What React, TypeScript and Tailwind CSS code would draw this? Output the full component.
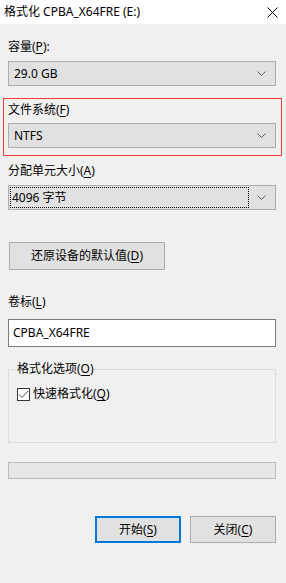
import React from 'react';

const font = "font-['Noto_Sans','Noto_Sans_CJK_SC',sans-serif]";

function Chevron() {
  return (
    <svg width="9" height="5" viewBox="0 0 9 5" className="shrink-0">
      <path d="M0.5 0.5 L4.5 4.5 L8.5 0.5" fill="none" stroke="#5a5a5a" strokeWidth="1" />
    </svg>
  );
}

function Combo({ value, focused }: { value: string; focused?: boolean }) {
  return (
    <div className="h-[25px] bg-[#e1e1e1] border border-[#adadad] flex items-center pl-[1px] pr-[9px]">
      <div className={`flex-1 h-[21px] flex items-center ${focused ? 'border border-dotted border-black pl-[1px]' : 'pl-[4px]'} mr-[8px]`}>
        <span>{value}</span>
      </div>
      <Chevron />
    </div>
  );
}

export default function App() {
  return (
    <div className={`${font} w-[286px] h-[583px] bg-[#f0f0f0] text-[12px] leading-[16px] text-black overflow-hidden`}>
      {/* title bar */}
      <div className="h-[24px] bg-white flex items-center pl-[4px] pr-[8px]">
        <span className="flex-1">格式化 CPBA_X64FRE (E:)</span>
        <svg width="11" height="11" viewBox="0 0 11 11">
          <path d="M0.5 0.5 L10.5 10.5 M10.5 0.5 L0.5 10.5" stroke="#000" strokeWidth="1" />
        </svg>
      </div>

      <div className="pl-[8px] pr-[10px]">
        <div className="mt-[15px] h-[16px]">容量(<u className="underline-offset-2">P</u>):</div>
        <div className="mt-[6px]">
          <Combo value="29.0 GB" />
        </div>

        <div className="mt-[12px] -ml-[5px] -mr-[6px] border border-[#f23b3b] pl-[4px] pr-[5px] pt-[3px] pb-[7px]">
          <div className="h-[16px]">文件系统(<u className="underline-offset-2">F</u>)</div>
          <div className="mt-[5px]">
            <Combo value="NTFS" />
          </div>
        </div>

        <div className="mt-[7px] h-[16px]">分配单元大小(<u className="underline-offset-2">A</u>)</div>
        <div className="mt-[6px]">
          <Combo value="4096 字节" focused />
        </div>

        <button className="mt-[32px] ml-[1px] w-[156px] h-[28px] bg-[#e1e1e1] border border-[#adadad] flex items-center justify-center">
          还原设备的默认值(<u className="underline-offset-2">D</u>)
        </button>

        <div className="mt-[24px] h-[16px]">卷标(<u className="underline-offset-2">L</u>)</div>
        <div className="mt-[9px] h-[28px] bg-white border border-[#7a7a7a] flex items-center pl-[4px]">
          CPBA_X64FRE
        </div>

        <fieldset className="mt-[14px] h-[82px] border border-[#dcdcdc] px-[8px] m-0">
          <legend className="h-[16px] leading-[16px]">格式化选项(<u className="underline-offset-2">O</u>)</legend>
          <div className="mt-[9px] flex items-center gap-[3px]">
            <div className="w-[13px] h-[13px] border border-[#333] bg-white flex items-center justify-center">
              <svg width="11" height="9" viewBox="0 0 11 9">
                <path d="M1 4.5 L4 7.5 L10 1" fill="none" stroke="#555" strokeWidth="1" />
              </svg>
            </div>
            <span>快速格式化(<u className="underline-offset-2">Q</u>)</span>
          </div>
        </fieldset>

        <div className="mt-[19px] h-[17px] bg-[#e6e6e6] border border-[#bcbcbc]" />

        <div className="mt-[37px] flex justify-end gap-[9px]">
          <button className="w-[86px] h-[27px] bg-[#e1e1e1] border-2 border-[#0078d7] flex items-center justify-center">
            开始(<u className="underline-offset-2">S</u>)
          </button>
          <button className="w-[86px] h-[27px] bg-[#e1e1e1] border border-[#adadad] flex items-center justify-center">
            关闭(<u className="underline-offset-2">C</u>)
          </button>
        </div>
      </div>
    </div>
  );
}
